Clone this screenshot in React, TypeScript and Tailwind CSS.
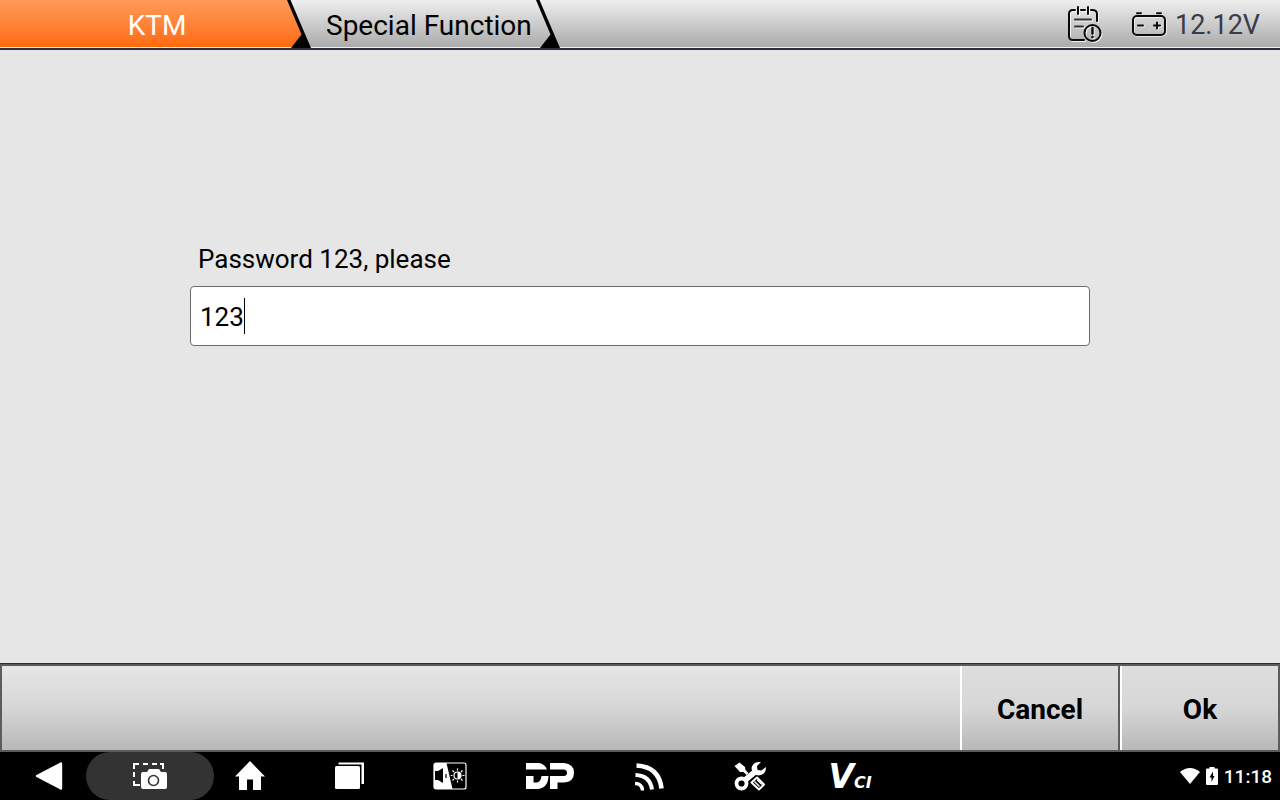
import React, { useState } from 'react';

const TabDivider = () => (
  <svg className="absolute right-[3px] top-0" width="24" height="48" viewBox="0 0 24 48" aria-hidden="true">
    <path d="M0 0H3.5L24 48H4L14.5 34.5Z" fill="#000" />
  </svg>
);

const ReportIcon = () => (
  <svg
    className="drop-shadow-[1px_1px_0_rgba(255,255,255,0.8)]"
    width="36"
    height="38"
    viewBox="0 0 36 38"
    fill="none"
    stroke="#0a0a0a"
    strokeWidth="2"
    strokeLinecap="round"
    aria-hidden="true"
  >
    <path d="M7 4H6Q2 4 2 8V30Q2 34 6 34H17M25 4Q30 4 30 8V15" />
    <path d="M7 4H8M14 4H18M24 4H25M11 1V8M21 1V8" />
    <path d="M8 13.5H24M8 20.5H16" stroke="#333" />
    <circle cx="25.5" cy="27" r="8" />
    <path d="M25.5 22V27.5" strokeWidth="2.4" />
    <circle cx="25.5" cy="31" r="0.7" strokeWidth="1.2" />
  </svg>
);

const BatteryIcon = () => (
  <svg
    className="drop-shadow-[1px_1px_0_rgba(255,255,255,0.6)]"
    width="36"
    height="26"
    viewBox="0 0 36 26"
    fill="none"
    stroke="#0a0a0a"
    strokeWidth="2"
    strokeLinecap="round"
    aria-hidden="true"
  >
    <rect x="2" y="4" width="32" height="19" rx="4" />
    <path d="M6 1.2H10M26 1.2H30M7 13.5H12M23 13.5H29M26 10.5V16.5" />
  </svg>
);

const CameraIcon = () => (
  <svg width="34" height="28" viewBox="0 0 34 28" aria-hidden="true">
    <g fill="none" stroke="#fff" strokeWidth="2">
      <path d="M1 7V2H6M10 2H15M19 2H24M27 2H30V7M1 10V15M1 19V23H7" />
    </g>
    <path d="M10 10H14L16 7H26L28 10H32Q34 10 34 12V25Q34 27 32 27H10Q8 27 8 25V12Q8 10 10 10Z" fill="#fff" />
    <circle cx="20.5" cy="18.5" r="5" fill="none" stroke="#333" strokeWidth="1.6" />
  </svg>
);

const MediaIcon = () => (
  <svg width="34" height="28" viewBox="0 0 34 28" aria-hidden="true">
    <rect x="1" y="1" width="32" height="26" rx="2" fill="#000" stroke="#fff" strokeWidth="1.2" />
    <path d="M3 1H13.5L19.5 27H3Q1 27 1 25V3Q1 1 3 1Z" fill="#fff" />
    <path d="M2 9H5L10 6V21L5 18H2Z" fill="#000" />
    <path d="M13 12V16" stroke="#000" strokeWidth="1.2" />
    <circle cx="24.5" cy="13.5" r="3.5" fill="none" stroke="#fff" strokeWidth="1.2" />
    <path d="M24.5 10A3.5 3.5 0 0 1 24.5 17Z" fill="#fff" />
    <path
      d="M24.5 6.5V8.5M24.5 18.5V20.5M17.8 13.5H19.5M29.5 13.5H31.5M19.5 8.5L21 10M28 17L29.5 18.5M19.5 18.5L21 17M28 10L29.5 8.5"
      stroke="#fff"
      strokeWidth="1.2"
    />
  </svg>
);

const DpLogo = () => (
  <svg width="48" height="28" viewBox="0 0 48 28" fill="#fff" aria-hidden="true">
    <path d="M0 1H13Q19 2 21 7.5H0Z" />
    <path d="M0 14H7.5V20.5H11Q15 19.5 15.5 14H22.5Q22 26.5 11 27H0Z" />
    <path d="M24 1H38Q48 2 48 10.5Q48 20 38 20.5H31.5V27H24V14H38Q41 13.5 41 11Q41 7.5 37.5 7.5H24Z" />
  </svg>
);

const SignalIcon = () => (
  <svg width="30" height="30" viewBox="0 0 30 30" fill="none" stroke="#fff" aria-hidden="true">
    <path d="M1.5 4.5Q24 5.5 26.5 27.5" strokeWidth="4.6" />
    <path d="M0.5 14Q15 14.5 17 28.5" strokeWidth="4" />
    <path d="M0 22.5Q7 22.5 7.5 29.5" strokeWidth="3.4" />
  </svg>
);

const ToolsIcon = () => (
  <svg width="34" height="30" viewBox="0 0 34 30" aria-hidden="true">
    <path d="M1.5 5L6.5 1.5L12 6L12.5 9L15.5 12L13.5 14L10.5 11L7 11Z" fill="#fff" />
    <path d="M11 20L23 10" stroke="#fff" strokeWidth="5.6" />
    <circle cx="8.5" cy="22.5" r="5" fill="#000" stroke="#fff" strokeWidth="3.8" />
    <path d="M28 1Q20 0 18.5 7Q19 14 25.5 14.5Q33 14 33 6L28.5 9.5L24.5 9L24 5Z" fill="#fff" />
    <path d="M24 16.5L31 23.5L26 28.5L18.5 21.5Z" fill="#000" stroke="#fff" strokeWidth="2" strokeLinejoin="round" />
    <path d="M21.5 20.5L26.5 25.5M24 18.8L29 23.5" stroke="#fff" strokeWidth="1.4" />
  </svg>
);

const HomeIcon = () => (
  <svg width="30" height="30" viewBox="0 0 30 30" aria-hidden="true">
    <path d="M15 0L30 15.5H26V29H18V18.5H12V29H4V15.5H0Z" fill="#fff" />
  </svg>
);

const RecentIcon = () => (
  <svg width="30" height="28" viewBox="0 0 30 28" fill="#fff" aria-hidden="true">
    <rect x="0" y="4" width="25" height="23" rx="1.5" />
    <path d="M3.5 0.5H29V22H26.5V2.5H3.5Z" />
  </svg>
);

const BackIcon = () => (
  <svg width="30" height="28" viewBox="0 0 30 28" aria-hidden="true">
    <path d="M2 14L26 1.5V26.5Z" fill="#fff" stroke="#fff" strokeWidth="2.4" strokeLinejoin="round" />
  </svg>
);

const VciLogo = () => (
  <span className="flex items-baseline font-['DejaVu_Sans',sans-serif] font-bold italic leading-none text-white">
    <span className="text-[33px]">V</span>
    <span className="text-[16px]">CI</span>
  </span>
);

const shortcuts = [
  { label: 'Home', icon: <HomeIcon /> },
  { label: 'Recent apps', icon: <RecentIcon /> },
  { label: 'Sound and brightness', icon: <MediaIcon /> },
  { label: 'DP', icon: <DpLogo /> },
  { label: 'Signal', icon: <SignalIcon /> },
  { label: 'Tools', icon: <ToolsIcon /> },
  { label: 'VCI', icon: <VciLogo /> },
];

const actionClass =
  'w-40 border-l-2 border-r-2 border-l-white border-r-[#5c5c5c] bg-linear-to-b from-[#dedede] via-[#d6d6d6] to-[#b8b8b8] pt-1 text-[28px] font-bold';

export default function App() {
  const [password, setPassword] = useState('123');

  return (
    <div className="flex min-h-screen flex-col bg-[#e6e6e6] font-['Roboto',sans-serif] text-black">
      <header className="border-b-2 border-[#2b2f40]">
        <div className="flex h-12 justify-between border-b border-[#f0f0f0] bg-linear-to-b from-[#efefef] to-[#ababab]">
          <nav className="flex text-[28px]">
            <button className="relative w-[314px] pt-1 text-white">
              <span className="absolute inset-0 bg-linear-to-b from-[#ff9a56] to-[#ff6a06] [clip-path:polygon(0_0,288px_0,303px_34px,292px_100%,0_100%)]" />
              <TabDivider />
              <span className="relative">KTM</span>
            </button>
            <button className="relative pl-3 pr-[31px] pt-1">
              Special Function
              <TabDivider />
            </button>
          </nav>
          <div className="flex items-center gap-7 pr-5 pt-[2px]">
            <button aria-label="Report">
              <ReportIcon />
            </button>
            <div className="flex items-center gap-2 text-[27px] text-[#383b48]">
              <BatteryIcon />
              <span className="pt-[2px]">12.12V</span>
            </div>
          </div>
        </div>
      </header>

      <main className="flex-1 px-[190px] pt-48">
        <label htmlFor="password" className="block px-2 text-[26px] leading-[34px]">
          Password 123, please
        </label>
        <div className="relative mt-[10px]">
          <input
            id="password"
            type="text"
            value={password}
            onChange={(e) => setPassword(e.target.value)}
            className="block h-[60px] w-full rounded border border-[#6b6b6b] bg-white px-[9px] pt-[2px] text-[26px] outline-none"
          />
          <span className="absolute left-[54px] top-3 h-9 w-px bg-black" />
        </div>
      </main>

      <footer className="border-t border-[#2b2b3a]">
        <div className="flex h-[88px] justify-end border-y-2 border-l-2 border-[#5c5c5c] bg-linear-to-b from-[#e6e6e6] via-[#d6d6d6] to-[#b8b8b8]">
          <button className={actionClass}>Cancel</button>
          <button className={actionClass}>Ok</button>
        </div>
      </footer>

      <nav className="flex h-12 items-center justify-between bg-black pr-2">
        <div className="flex h-full">
          <button aria-label="Back" className="flex w-[100px] items-center justify-center">
            <BackIcon />
          </button>
          <button aria-label="Screenshot" className="-mx-[14px] flex w-32 items-center justify-center rounded-full bg-[#333]">
            <CameraIcon />
          </button>
          {shortcuts.map((item) => (
            <button key={item.label} aria-label={item.label} className="flex w-[100px] items-center justify-center">
              {item.icon}
            </button>
          ))}
        </div>
        <div className="flex items-center gap-[6px] pt-[2px] text-[19px] font-medium text-white">
          <svg width="20" height="20" viewBox="0 0 20 20" aria-hidden="true">
            <path d="M0 5Q10 -3 20 5L10 17Z" fill="#fff" />
          </svg>
          <svg width="12" height="20" viewBox="0 0 12 20" aria-hidden="true">
            <path d="M3.5 0H8.5V1.5H11Q12 1.5 12 2.5V17Q12 18 11 18H1Q0 18 0 17V2.5Q0 1.5 1 1.5H3.5Z" fill="#fff" />
            <path d="M7 4.5L3.5 10.500H5.500V15L8.500 9H7Z" fill="#000" />
          </svg>
          <span>11:18</span>
        </div>
      </nav>
    </div>
  );
}
